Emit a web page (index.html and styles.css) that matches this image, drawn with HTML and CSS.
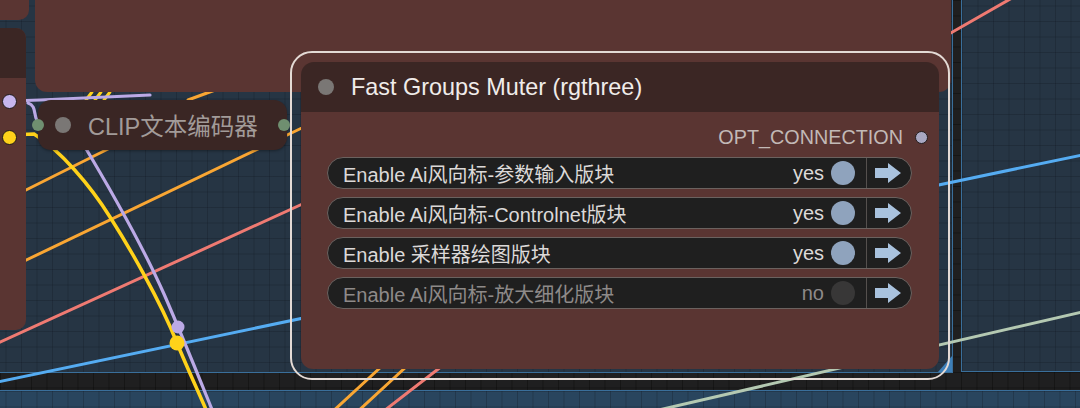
FILE: index.html
```html
<!DOCTYPE html>
<html lang="zh">
<head>
<meta charset="utf-8">
<title>Fast Groups Muter</title>
<link rel="stylesheet" href="styles.css">
</head>
<body>
<div class="canvas">
  <div class="group group-main"><span class="handle"></span></div>
  <div class="group group-right"></div>
  <div class="group group-bottom"></div>

  <svg class="wires" width="1080" height="408" viewBox="0 0 1080 408" xmlns="http://www.w3.org/2000/svg">
    <g fill="none" stroke-linecap="round">
      <path d="M650 412 L1082 312" stroke="#b4c9b2" stroke-width="3"/>
      <path d="M-2 382 L1082 155" stroke="#55acf2" stroke-width="3"/>
      <path d="M-2 343 L320 196" stroke="#ef7a72" stroke-width="3"/>
      <path d="M935 42 L1012 -2" stroke="#ef7a72" stroke-width="3"/>
      <path d="M455 356 L380 414" stroke="#ef7a72" stroke-width="3"/>
      <path d="M18 194 L112 147" stroke="#f9a633" stroke-width="3"/>
      <path d="M18 264 L306 126" stroke="#f9a633" stroke-width="3"/>
      <path d="M188 100 L226 86" stroke="#f9a633" stroke-width="3"/>
      <path d="M395 354 L330 414" stroke="#f9a633" stroke-width="3"/>
      <path d="M420 354 L355 414" stroke="#f9a633" stroke-width="3"/>
      <path d="M86 100 L92 92 M95 100 L101 92 M104 100 L110 92" stroke="#ffd21a" stroke-width="3"/>
      <path d="M9 101 L40 100 C80 98 110 97 150 95" stroke="#bba9e6" stroke-width="3.2"/>
      <path d="M28 103 C38 106 32 118 40 125" stroke="#bba9e6" stroke-width="3.2"/>
      <path d="M82 142 C97 167 140 240 164 294 C184 340 200 380 213 412" stroke="#bba9e6" stroke-width="3.2"/>
      <path d="M9 135 L34 134 C60 150 90 185 110 217 C128 245 160 300 177 343 C188 370 200 395 207 412" stroke="#ffd21a" stroke-width="3.5"/>
      <circle cx="178" cy="327" r="6.5" fill="#bba9e6"/>
      <circle cx="177" cy="343" r="7.5" fill="#ffd21a"/>
    </g>
  </svg>

  <div class="node node-corner"></div>
  <div class="node node-top"></div>

  <div class="node node-left">
    <div class="node-left-title"></div>
    <div class="node-left-slots">
      <span class="slot slot-purple"></span>
      <span class="slot slot-yellow"></span>
    </div>
  </div>

  <div class="node node-clip">
    <span class="port port-in"></span>
    <span class="status-dot"></span>
    <span class="clip-title">CLIP文本编码器</span>
    <span class="port port-out"></span>
  </div>

  <div class="node node-muter">
    <div class="selection"></div>
    <div class="muter-title">
      <span class="status-dot"></span>
      <span class="muter-title-text">Fast Groups Muter (rgthree)</span>
    </div>
    <div class="muter-body">
      <div class="output-row">
        <span class="output-label">OPT_CONNECTION</span>
        <span class="output-slot"></span>
      </div>
      <div class="toggle-list">
        <div class="toggle">
          <span class="toggle-label">Enable Ai风向标-参数输入版块</span>
          <span class="toggle-value">yes</span>
          <span class="toggle-dot"></span>
          <span class="toggle-nav"><svg width="26" height="20" viewBox="0 0 26 20"><polygon points="0,5 13,5 13,0 26,10 13,20 13,15 0,15" fill="#a9c2de"/></svg></span>
        </div>
        <div class="toggle">
          <span class="toggle-label">Enable Ai风向标-Controlnet版块</span>
          <span class="toggle-value">yes</span>
          <span class="toggle-dot"></span>
          <span class="toggle-nav"><svg width="26" height="20" viewBox="0 0 26 20"><polygon points="0,5 13,5 13,0 26,10 13,20 13,15 0,15" fill="#a9c2de"/></svg></span>
        </div>
        <div class="toggle">
          <span class="toggle-label">Enable 采样器绘图版块</span>
          <span class="toggle-value">yes</span>
          <span class="toggle-dot"></span>
          <span class="toggle-nav"><svg width="26" height="20" viewBox="0 0 26 20"><polygon points="0,5 13,5 13,0 26,10 13,20 13,15 0,15" fill="#a9c2de"/></svg></span>
        </div>
        <div class="toggle toggle-off">
          <span class="toggle-label">Enable Ai风向标-放大细化版块</span>
          <span class="toggle-value">no</span>
          <span class="toggle-dot"></span>
          <span class="toggle-nav"><svg width="26" height="20" viewBox="0 0 26 20"><polygon points="0,5 13,5 13,0 26,10 13,20 13,15 0,15" fill="#a9c2de"/></svg></span>
        </div>
      </div>
    </div>
  </div>
</div>
</body>
</html>
```

FILE: styles.css
```css
html, body {
  margin: 0;
  padding: 0;
  background: #1d1e20;
}

.canvas {
  position: relative;
  width: 1080px;
  height: 408px;
  overflow: hidden;
  font-family: "Liberation Sans", Arial, "Noto Sans CJK SC", sans-serif;
  background-color: #1f1f20;
  background-image:
    linear-gradient(to right, rgba(0,0,0,0.3) 1px, transparent 1px),
    linear-gradient(to bottom, rgba(0,0,0,0.3) 1px, transparent 1px);
  background-size: 15.5px 15.5px;
}

.group {
  position: absolute;
  box-sizing: border-box;
  background-color: #263544;
  background-image:
    linear-gradient(to right, rgba(18,26,35,0.3) 1px, transparent 1px),
    linear-gradient(to bottom, rgba(18,26,35,0.3) 1px, transparent 1px);
  background-size: 15.5px 15.5px;
}

.group-main {
  left: -10px;
  top: -10px;
  width: 963px;
  height: 383px;
  border-right: 1px solid #3a6f9b;
  border-bottom: 1px solid #3a6f9b;
}

.handle {
  position: absolute;
  right: 0;
  bottom: 0;
  width: 0;
  height: 0;
  border-left: 14px solid transparent;
  border-bottom: 16px solid #3d7fb8;
}

.group-right {
  left: 961px;
  top: -10px;
  width: 130px;
  height: 382px;
  border-left: 1px solid #3a6f9b;
  border-bottom: 1px solid #3a6f9b;
}

.group-bottom {
  left: -10px;
  top: 390px;
  width: 1100px;
  height: 30px;
  background-color: #29455e;
  border-top: 1px solid #3a6f9b;
}

.wires {
  position: absolute;
  left: 0;
  top: 0;
}

.node {
  position: absolute;
  box-sizing: border-box;
  background: #5a3532;
}

.node-corner {
  left: -10px;
  top: -10px;
  width: 39px;
  height: 30px;
  border-radius: 10px;
}

.node-top {
  left: 35px;
  top: -20px;
  width: 916px;
  height: 112px;
  border-radius: 12px;
}

.node-left {
  left: -10px;
  top: 28px;
  width: 36px;
  height: 302px;
  border-radius: 10px;
  display: flex;
  flex-direction: column;
}

.node-left-title {
  height: 50px;
  background: #3b2624;
  border-radius: 10px 10px 0 0;
}

.node-left-slots {
  display: flex;
  flex-direction: column;
  gap: 21px;
  padding: 16px 0 0 12px;
}

.slot {
  width: 13px;
  height: 13px;
  border-radius: 50%;
  border: 1.5px solid #1e1a1a;
}

.slot-purple { background: #c7b6ee; }
.slot-yellow { background: #ffd21a; }

.node-clip {
  left: 38px;
  top: 100px;
  width: 249px;
  height: 50px;
  border-radius: 13px;
  background: #3a2624;
  display: flex;
  align-items: center;
  padding-left: 17px;
  gap: 17px;
  box-shadow: 0 1px 3px rgba(0,0,0,0.35);
}

.port {
  position: absolute;
  top: 19px;
  width: 12px;
  height: 12px;
  border-radius: 50%;
  background: #6f8f70;
}

.port-in { left: -6px; }
.port-out { right: -3px; }

.status-dot {
  width: 16px;
  height: 16px;
  border-radius: 50%;
  background: #7a7775;
  flex: none;
}

.clip-title {
  font-size: 23.5px;
  color: #a29b99;
  white-space: nowrap;
}

.node-muter {
  left: 301px;
  top: 62px;
  width: 638px;
  height: 307px;
  border-radius: 13px 13px 12px 12px;
  display: flex;
  flex-direction: column;
}

.selection {
  position: absolute;
  left: -11px;
  top: -11px;
  right: -11px;
  bottom: -11px;
  border: 2px solid #e4dad5;
  border-radius: 22px;
  pointer-events: none;
}

.muter-title {
  height: 50px;
  flex: none;
  background: #3b2624;
  border-radius: 13px 13px 0 0;
  display: flex;
  align-items: center;
  padding-left: 17px;
  gap: 17px;
}

.muter-title-text {
  font-size: 23.4px;
  color: #f0ecea;
  white-space: nowrap;
}

.muter-body {
  display: flex;
  flex-direction: column;
  padding: 14px 27px 0 26px;
}

.output-row {
  height: 22px;
  display: flex;
  align-items: center;
  justify-content: flex-end;
  gap: 12px;
  margin-right: -16px;
}

.output-label {
  font-size: 19.8px;
  line-height: 22px;
  color: #c2b9b6;
}

.output-slot {
  width: 11px;
  height: 11px;
  border-radius: 50%;
  background: #a9a8c2;
  border: 1.5px solid #231d1d;
}

.toggle-list {
  display: flex;
  flex-direction: column;
  gap: 8px;
  margin-top: 9px;
}

.toggle {
  box-sizing: border-box;
  height: 32px;
  display: flex;
  align-items: center;
  background: #1f1f1f;
  border: 1.5px solid #6b625f;
  border-radius: 16px;
  padding-left: 15px;
}

.toggle-label {
  flex: 1;
  font-size: 20px;
  color: #dcd9d8;
  white-space: nowrap;
}

.toggle-value {
  font-size: 20px;
  color: #dcd9d8;
  margin-right: 7px;
}

.toggle-dot {
  width: 24px;
  height: 24px;
  border-radius: 50%;
  background: #8fa3bd;
  margin-right: 11px;
  flex: none;
}

.toggle-nav {
  align-self: stretch;
  width: 45px;
  flex: none;
  border-left: 1px solid #55504e;
  display: flex;
  align-items: center;
  justify-content: center;
  padding-right: 2px;
  box-sizing: border-box;
}

.toggle-nav svg { display: block; }

.toggle-off .toggle-label,
.toggle-off .toggle-value {
  color: #8e8a89;
}

.toggle-off .toggle-dot {
  background: #383737;
}
```
